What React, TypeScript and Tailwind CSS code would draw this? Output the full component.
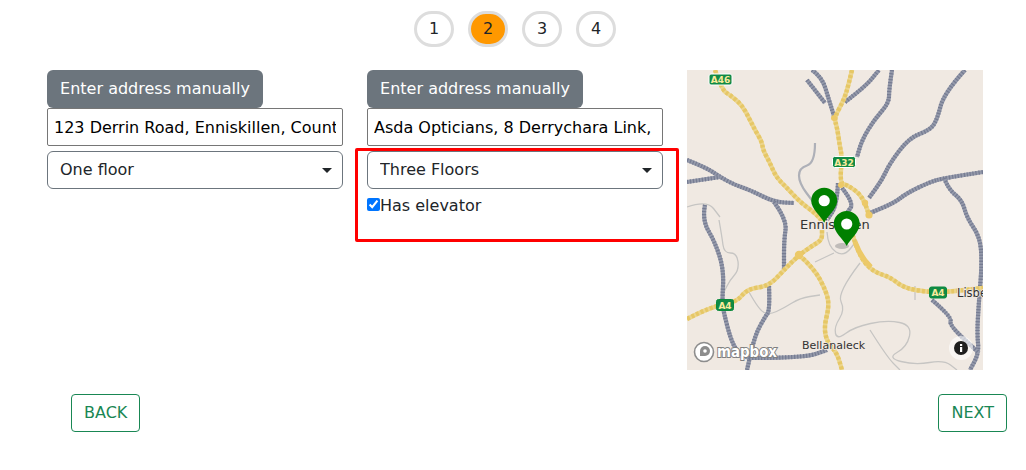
import React from "react";

type Pt = [number, number];

// road centre lines in map pixels, read off the screenshot
const YELLOW_ROADS: Pt[][] = [
  [[28, 0], [35, 20], [43, 25], [55, 35], [63, 50], [68, 60], [75, 72], [76, 80], [83, 93], [89, 107], [100, 118], [113, 132], [128, 143], [136, 152]],
  [[165, 0], [162, 13], [157, 30], [147, 48], [150, 57], [153, 77], [155, 87], [153, 113], [160, 115], [172, 123], [178, 133], [182, 145]],
  [[164, 160], [167, 170], [175, 190], [187, 202], [203, 207], [217, 218], [240, 222], [260, 222], [296, 218]],
  [[0, 249], [23, 237], [50, 232], [60, 219], [82, 216], [97, 200], [112, 185], [125, 176], [135, 170], [135, 160]],
  [[112, 185], [127, 198], [140, 223], [142, 237], [137, 257], [140, 272], [150, 283], [155, 300]],
];

const GREY_ROADS: Pt[][] = [
  [[125, 0], [135, 7], [142, 30], [147, 46]],
  [[120, 10], [138, 33]],
  [[158, 32], [178, 17], [192, 0]],
  [[205, 0], [202, 20], [202, 33], [187, 50], [175, 70], [170, 87]],
  [[278, 0], [257, 23], [250, 50], [243, 60], [222, 68], [203, 93], [195, 110], [182, 128]],
  [[296, 102], [257, 108], [243, 112], [220, 123], [207, 133], [183, 143]],
  [[257, 108], [262, 120], [275, 130], [280, 148], [293, 167], [295, 193], [292, 230], [290, 263], [292, 283], [283, 300]],
  [[245, 230], [265, 247], [262, 255], [292, 283]],
  [[0, 90], [20, 98], [33, 107], [48, 115], [63, 120], [87, 132], [107, 133]],
  [[0, 112], [33, 107]],
  [[87, 132], [100, 150], [97, 170], [97, 200]],
  [[82, 216], [83, 240], [78, 247], [68, 265], [60, 300]],
  [[18, 135], [15, 150], [28, 172], [37, 200], [35, 233], [37, 243], [43, 267], [50, 282], [62, 288]],
  [[62, 288], [117, 288], [140, 280]],
  [[151, 113], [150, 135], [140, 150]],
  [[155, 118], [167, 133], [160, 143]],
];

const THIN_ROADS: Pt[][] = [
  [[0, 137], [20, 130], [33, 147]],
  [[32, 150], [35, 167], [37, 183], [50, 183], [52, 200], [43, 210], [37, 222]],
  [[62, 222], [72, 240], [82, 245], [97, 238], [113, 228], [133, 225]],
  [[128, 192], [147, 183]],
  [[140, 162], [141, 177], [157, 187], [170, 170]],
  [[173, 193], [150, 223], [158, 240], [147, 257], [150, 270], [167, 257], [200, 250], [225, 255], [220, 277], [200, 288], [228, 295], [257, 290], [270, 300]],
  [[183, 260], [200, 287], [213, 300]],
  [[228, 216], [228, 230]],
];

const MINOR_ROAD: Pt[] = [[128, 73], [128, 93], [112, 98], [112, 113], [127, 133]];

// rounds the corners of a road by curving through the midpoints
function smooth(pts: Pt[]) {
  let d = `M${pts[0][0]} ${pts[0][1]}`;
  for (let i = 1; i < pts.length - 1; i++) {
    const mx = (pts[i][0] + pts[i + 1][0]) / 2;
    const my = (pts[i][1] + pts[i + 1][1]) / 2;
    d += ` Q${pts[i][0]} ${pts[i][1]} ${mx} ${my}`;
  }
  const last = pts[pts.length - 1];
  return `${d} L${last[0]} ${last[1]}`;
}

function Shield({ x, y, w, label, white }: { x: number; y: number; w: number; label: string; white?: boolean }) {
  return (
    <g>
      <rect x={x} y={y} width={w} height="11" rx="2" fill="#118a45" stroke={white ? "#ffffff" : "#0b8a3c"} strokeWidth="1" />
      <text x={x + w / 2} y={y + 9} textAnchor="middle" fontSize="9" fontWeight="bold" fill="#f9eb9e">
        {label}
      </text>
    </g>
  );
}

function Pin({ x, y }: { x: number; y: number }) {
  // x/y is the centre of the pin's head
  return (
    <g transform={`translate(${x} ${y})`}>
      <path d="M0 22 C-3.5 15 -13 8 -13 0 A13 13 0 0 1 13 0 C13 8 3.5 15 0 22 Z" fill="#008000" />
      <circle cx="0" cy="0" r="5.6" fill="#ffffff" />
    </g>
  );
}

function MapPicture() {
  return (
    <svg viewBox="0 0 296 300" className="w-[296px] h-[300px] bg-[#f0e9e2]">
      <defs>
        <filter id="soft" x="-5%" y="-5%" width="110%" height="110%">
          <feGaussianBlur stdDeviation="0.45" />
        </filter>
      </defs>
      <g filter="url(#soft)" fill="none" strokeLinejoin="round">
        {THIN_ROADS.map((p, i) => (
          <path key={i} d={smooth(p)} stroke="#c6c5c3" strokeWidth="1.3" />
        ))}
        <path d={smooth(MINOR_ROAD)} stroke="#aeb0b8" strokeWidth="2.2" />
        {GREY_ROADS.map((p, i) => (
          <g key={i}>
            <path d={smooth(p)} stroke="#9499aa" strokeWidth="4.2" />
            <path d={smooth(p)} stroke="#767c92" strokeWidth="4.2" strokeDasharray="1.2 1.8" />
          </g>
        ))}
        {YELLOW_ROADS.map((p, i) => (
          <g key={i}>
            <path d={smooth(p)} stroke="#ecd58c" strokeWidth="4.4" />
            <path d={smooth(p)} stroke="#e6c766" strokeWidth="4.4" strokeDasharray="3 2" />
          </g>
        ))}
        <path d="M168 172 Q174 188 184 197" stroke="#ecc968" strokeWidth="5" />
        <circle cx="147" cy="48" r="3" fill="#ecc968" stroke="none" />
        <circle cx="112" cy="185" r="4.2" fill="#ecc968" stroke="none" />
        <circle cx="154" cy="115" r="3" fill="#ecc968" stroke="none" />
        <circle cx="178" cy="133" r="3.2" fill="#ecc968" stroke="none" />
        <circle cx="182" cy="145" r="3.6" fill="#ecc968" stroke="none" />
      </g>

      <Shield x={22} y={4} w={23} label="A46" white />
      <Shield x={145.5} y={86.5} w={23} label="A32" white />
      <Shield x={29.5} y={229.5} w={17} label="A4" />
      <Shield x={242.5} y={217} w={17} label="A4" />

      <text x="113" y="159" fontSize="13" fill="#333333" stroke="#f0e9e2" strokeWidth="2" paintOrder="stroke">
        Enniskillen
      </text>
      <text x="115" y="279" fontSize="11" fill="#333333" stroke="#f0e9e2" strokeWidth="1.5" paintOrder="stroke">
        Bellanaleck
      </text>
      <text x="270" y="227" fontSize="11.5" fill="#333333" stroke="#f0e9e2" strokeWidth="1.5" paintOrder="stroke">
        Lisbe
      </text>

      <ellipse cx="155" cy="176" rx="7" ry="3" fill="#8f8f8f" opacity="0.5" />
      <Pin x={137.2} y={130.7} />
      <Pin x={159.7} y={154} />

      <circle cx="17" cy="282" r="9.5" fill="#ffffff" stroke="#8d8d8d" strokeWidth="1.6" />
      <path d="M13 286 V281 A5 5 0 1 1 18 286 Z" fill="#8d8d8d" />
      <circle cx="18" cy="281" r="1.8" fill="#ffffff" />
      <text
        x="30"
        y="287"
        fontSize="15"
        fontWeight="bold"
        fill="#ffffff"
        stroke="#808080"
        strokeWidth="2"
        paintOrder="stroke"
        textLength={60}
        lengthAdjust="spacingAndGlyphs"
      >
        mapbox
      </text>

      <circle cx="274" cy="278" r="12" fill="#ffffff" opacity="0.6" />
      <circle cx="274" cy="278" r="7" fill="#1f1f1f" />
      <rect x="273" y="277" width="2.2" height="5" fill="#ffffff" />
      <rect x="273" y="274" width="2.2" height="2" fill="#ffffff" />
    </svg>
  );
}

function AddressColumn({ address }: { address: string }) {
  return (
    <>
      <button className="self-start h-[38px] w-[216px] rounded-md bg-[#6c757d] text-white text-base">
        Enter address manually
      </button>
      <input
        readOnly
        value={address}
        className="h-[38px] w-[296px] border border-[#767676] rounded-[2px] px-[6px] text-base text-black outline-none"
      />
    </>
  );
}

function FloorSelect({ value, options }: { value: string; options: string[] }) {
  return (
    <div className="relative w-[296px] h-[38px]">
      <select
        defaultValue={value}
        className="appearance-none h-[38px] w-[296px] border border-[#6c757d] rounded-md bg-white pl-3 pr-6 text-base text-[#212529]"
      >
        {options.map((o) => (
          <option key={o}>{o}</option>
        ))}
      </select>
      <svg viewBox="0 0 10 5" className="absolute left-[275px] top-[17px] w-[10px] h-[5px]">
        <path d="M0 0 H10 L5 5 Z" fill="#212529" />
      </svg>
    </div>
  );
}

export default function App() {
  const steps = [1, 2, 3, 4];
  const floors = ["One floor", "Two Floors", "Three Floors"];

  return (
    <div className="w-[1026px] h-[470px] bg-white text-[#212529] text-base overflow-hidden font-['DejaVu_Sans',sans-serif]">
      <div className="flex justify-center gap-[14px] pt-[11px] pl-[4px]">
        {steps.map((s) => (
          <div
            key={s}
            className={
              s === 2
                ? "w-[40px] h-[36px] rounded-full border-[3px] border-[#dddddd] bg-[#ff9800] flex items-center justify-center"
                : "w-[40px] h-[36px] rounded-full border-[3px] border-[#dddddd] bg-white flex items-center justify-center"
            }
          >
            {s}
          </div>
        ))}
      </div>

      <div className="flex gap-[24px] pl-[47px] mt-[23px]">
        <div className="flex flex-col w-[296px]">
          <AddressColumn address="123 Derrin Road, Enniskillen, County Fermanagh" />
          <div className="mt-[5px]">
            <FloorSelect value="One floor" options={floors} />
          </div>
        </div>

        <div className="flex flex-col w-[296px]">
          <AddressColumn address="Asda Opticians, 8 Derrychara Link, Enniskillen" />
          <div className="mt-[2px] -ml-[12px] w-[324px] h-[94px] border-[3px] border-[#ff0000] rounded-[2px] pl-[9px]">
            <FloorSelect value="Three Floors" options={floors} />
            <label className="flex items-start h-[24px] mt-[5px]">
              <input type="checkbox" defaultChecked readOnly className="w-[13px] h-[13px] mt-[4px]" />
              Has elevator
            </label>
          </div>
        </div>

        <MapPicture />
      </div>

      <div className="flex justify-between pl-[71px] pr-[19px] mt-[24px]">
        <button className="h-[38px] px-3 rounded border border-[#198754] text-[#198754]">BACK</button>
        <button className="h-[38px] px-3 rounded border border-[#198754] text-[#198754]">NEXT</button>
      </div>
    </div>
  );
}
